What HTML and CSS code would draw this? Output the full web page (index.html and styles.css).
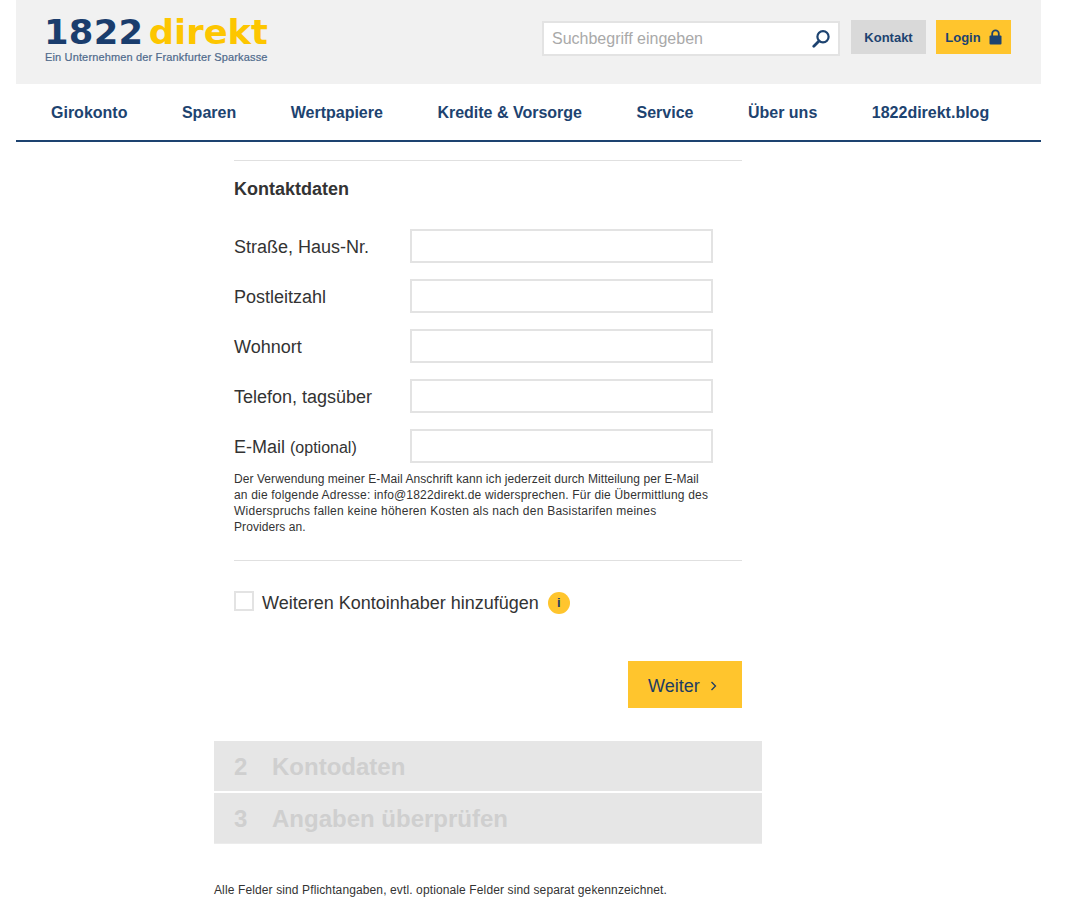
FILE: index.html
```html
<!DOCTYPE html>
<html lang="de">
<head>
    <meta charset="UTF-8">
    <meta name="viewport" content="width=device-width, initial-scale=1.0">
    <title>1822direkt - Kontakt</title>
    <link rel="stylesheet" href="styles.css">
</head>
<body>
    <div class="page">
        <header class="top-bar">
            <a href="#" class="logo">
                <span class="logo-mark"><span class="logo-num">1822</span><span class="logo-name">direkt</span></span>
                <span class="logo-claim">Ein Unternehmen der Frankfurter Sparkasse</span>
            </a>
            <div class="top-actions">
                <div class="search-box">
                    <span class="search-hint">Suchbegriff eingeben</span>
                    <svg class="search-icon" width="18" height="18" viewBox="0 0 18 18">
                        <circle cx="11" cy="6.8" r="5.6" fill="none" stroke="#1d4370" stroke-width="2.2"/>
                        <path d="M7 11 L1.8 16.2" stroke="#1d4370" stroke-width="2.8" stroke-linecap="round"/>
                    </svg>
                </div>
                <a href="#" class="top-btn top-btn-grey">Kontakt</a>
                <a href="#" class="top-btn top-btn-yellow">Login
                    <svg class="lock-icon" width="13" height="16" viewBox="0 0 13 16">
                        <path d="M3.2 7V4.6a3.3 3.3 0 0 1 6.6 0V7" fill="none" stroke="#1d4370" stroke-width="1.8"/>
                        <rect x="0.5" y="6.5" width="12" height="9" rx="1" fill="#1d4370"/>
                    </svg>
                </a>
            </div>
        </header>

        <nav class="main-nav">
            <a href="#">Girokonto</a>
            <a href="#">Sparen</a>
            <a href="#">Wertpapiere</a>
            <a href="#">Kredite &amp; Vorsorge</a>
            <a href="#">Service</a>
            <a href="#">Über uns</a>
            <a href="#">1822direkt.blog</a>
        </nav>

        <main class="content">
            <section class="form-area">
                <h2 class="form-title">Kontaktdaten</h2>

                <div class="form-row">
                    <label>Straße, Haus-Nr.</label>
                    <input type="text">
                </div>
                <div class="form-row">
                    <label>Postleitzahl</label>
                    <input type="text">
                </div>
                <div class="form-row">
                    <label>Wohnort</label>
                    <input type="text">
                </div>
                <div class="form-row">
                    <label>Telefon, tagsüber</label>
                    <input type="text">
                </div>
                <div class="form-row">
                    <label>E-Mail <small>(optional)</small></label>
                    <input type="text">
                </div>

                <p class="mail-note">Der Verwendung meiner E-Mail Anschrift kann ich jederzeit durch Mitteilung per E-Mail<br><span class="note-wide">an die folgende Adresse: info@1822direkt.de widersprechen. Für die Übermittlung des</span><br><span class="note-wider">Widerspruchs fallen keine höheren Kosten als nach den Basistarifen meines</span><br>Providers an.</p>

                <div class="check-row">
                    <span class="check-box"></span>
                    <span class="check-label">Weiteren Kontoinhaber hinzufügen</span>
                    <span class="info-dot">i</span>
                </div>

                <div class="button-row">
                    <a href="#" class="next-btn"><span class="next-text">Weiter</span>
                        <svg width="8" height="10" viewBox="0 0 8 10">
                            <path d="M1.5 1 L5.5 5 L1.5 9" fill="none" stroke="#1d3c63" stroke-width="1.3"/>
                        </svg>
                    </a>
                </div>
            </section>

            <div class="step"><span class="step-num">2</span>Kontodaten</div>
            <div class="step step-last"><span class="step-num">3</span>Angaben überprüfen</div>

            <p class="foot-note">Alle Felder sind Pflichtangaben, evtl. optionale Felder sind separat gekennzeichnet.</p>
        </main>
    </div>
</body>
</html>
```

FILE: styles.css
```css
body {
    margin: 0;
    background-color: #fff;
    font-family: 'Liberation Sans', Arial, sans-serif;
    color: #333;
}
a {
    text-decoration: none;
}
.page {
    width: 1025px;
    margin-left: 16px;
}
.top-bar {
    height: 84px;
    background-color: #f1f1f1;
    display: flex;
    justify-content: space-between;
    padding: 0 30px 0 29px;
}
.logo {
    display: flex;
    flex-direction: column;
    padding-top: 15px;
}
.logo-mark {
    display: block;
    width: 222px;
    height: 35px;
    font-family: 'DejaVu Sans', sans-serif;
    font-weight: bold;
    font-size: 33px;
    line-height: 36px;
    white-space: nowrap;
    transform: scaleX(1.07);
    transform-origin: left center;
}
.logo-num {
    color: #1a3d6d;
    letter-spacing: 0.3px;
    margin-right: 5px;
    margin-left: -1px;
}
.logo-name {
    color: #fdc600;
}
.logo-claim {
    font-size: 11px;
    letter-spacing: 0.15px;
    color: #4f6a8c;
    line-height: 14px;
    white-space: nowrap;
    -webkit-text-stroke: 0.2px #4f6a8c;
}
.top-actions {
    display: flex;
    align-items: flex-start;
    padding-top: 20px;
}
.search-box {
    width: 298px;
    height: 35px;
    box-sizing: border-box;
    border: 2px solid #e3e3e3;
    background-color: #fff;
    display: flex;
    align-items: center;
    justify-content: space-between;
    padding: 0 8px 0 8px;
    margin-top: 1px;
    margin-right: 11px;
}
.search-hint {
    font-size: 16px;
    color: #a9a9a9;
}
.top-btn {
    height: 34px;
    box-sizing: border-box;
    width: 75px;
    padding-top: 1px;
    display: flex;
    align-items: center;
    justify-content: center;
    font-size: 13px;
    font-weight: bold;
    color: #1d4370;
}
.top-btn-grey {
    background-color: #d9d9d9;
    margin-right: 10px;
}
.top-btn-yellow {
    background-color: #ffc52d;
}
.lock-icon {
    margin-left: 8px;
    margin-top: -1px;
}
.main-nav {
    height: 56px;
    border-bottom: 2px solid #1d4370;
    display: flex;
    align-items: center;
    gap: 54.5px;
    padding-left: 35px;
}
.main-nav a {
    padding-top: 2px;
    font-size: 16px;
    font-weight: bold;
    color: #1d4370;
}
.content {
    width: 548px;
    margin-left: 198px;
}
.form-area {
    margin: 18px 20px 0;
    border-top: 1px solid #e0e0e0;
    padding-top: 18px;
}
.form-title {
    margin: 0 0 30px;
    font-size: 18px;
    line-height: 20px;
    font-weight: bold;
    color: #333;
}
.form-row {
    display: flex;
    align-items: center;
    height: 34px;
    margin-bottom: 16px;
}
.form-row label {
    width: 176px;
    padding-top: 2px;
    font-size: 18px;
    color: #333;
}
.form-row label small {
    font-size: 16px;
}
.form-row input {
    width: 303px;
    height: 34px;
    box-sizing: border-box;
    border: 2px solid #e3e3e3;
    background-color: #fff;
    margin: 0;
}
.mail-note {
    margin: -8px 0 0;
    padding-bottom: 25px;
    font-size: 12px;
    letter-spacing: 0.07px;
    line-height: 16px;
    white-space: nowrap;
    color: #333;
}
.note-wide {
    letter-spacing: 0.18px;
}
.note-wider {
    letter-spacing: 0.24px;
}
.check-row {
    border-top: 1px solid #e0e0e0;
    padding-top: 30px;
    display: flex;
    align-items: center;
    height: 24px;
}
.check-box {
    border: 2px solid #e3e3e3;
    width: 16px;
    height: 16px;
    margin-right: 8px;
    margin-top: -4px;
}
.check-label {
    font-size: 18px;
    color: #333;
}
.info-dot {
    width: 22px;
    height: 22px;
    border-radius: 50%;
    background-color: #ffc52d;
    margin-left: 9px;
    color: #1d3c63;
    font-size: 13px;
    font-weight: bold;
    text-align: center;
    line-height: 22px;
}
.button-row {
    display: flex;
    justify-content: flex-end;
    margin-top: 46px;
}
.next-btn {
    width: 114px;
    height: 47px;
    box-sizing: border-box;
    padding: 3px 0 0 20px;
    background-color: #ffc52d;
    color: #1d3c63;
    font-size: 18px;
    display: flex;
    align-items: center;
    gap: 10px;
}
.step {
    height: 50px;
    box-sizing: border-box;
    background-color: #e6e6e6;
    margin-bottom: 2px;
    padding: 1px 0 0 20px;
    display: flex;
    align-items: center;
    font-size: 24px;
    font-weight: bold;
    color: #cfcfcf;
}
.step:first-of-type {
    margin-top: 33px;
}
.step-last {
    height: 51px;
    border-bottom: 1px solid #ececec;
}
.step-num {
    width: 38px;
}
.foot-note {
    margin: 38px 0 0;
    font-size: 12px;
    letter-spacing: 0.12px;
    line-height: 16px;
    color: #333;
}
```
